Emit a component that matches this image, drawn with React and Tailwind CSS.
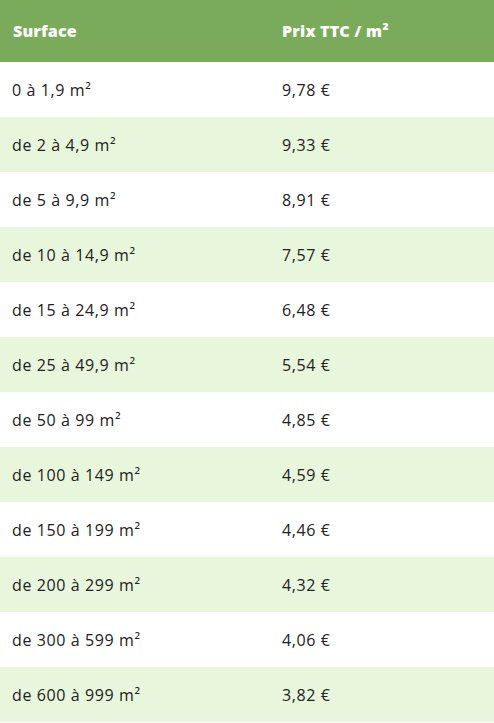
const rows = [
  ["0 à 1,9 m²", "9,78 €"],
  ["de 2 à 4,9 m²", "9,33 €"],
  ["de 5 à 9,9 m²", "8,91 €"],
  ["de 10 à 14,9 m²", "7,57 €"],
  ["de 15 à 24,9 m²", "6,48 €"],
  ["de 25 à 49,9 m²", "5,54 €"],
  ["de 50 à 99 m²", "4,85 €"],
  ["de 100 à 149 m²", "4,59 €"],
  ["de 150 à 199 m²", "4,46 €"],
  ["de 200 à 299 m²", "4,32 €"],
  ["de 300 à 599 m²", "4,06 €"],
  ["de 600 à 999 m²", "3,82 €"],
];

export default function App() {
  return (
    <div className="w-[494px] bg-white font-['Open_Sans',sans-serif] text-[16px] text-[#222222]">
      {/* Header */}
      <div className="grid grid-cols-[270px_1fr] h-[62px] items-center bg-[#79ab5a] text-white font-extrabold text-[16px] tracking-[0.2px]">
        <div className="px-[13px]">Surface</div>
        <div className="px-[12px]">Prix TTC / m²</div>
      </div>

      {rows.map(([surface, prix], i) => (
        <div
          key={surface}
          className={`grid grid-cols-[270px_1fr] h-[55px] items-center tracking-[0.6px] ${i % 2 === 1 ? "bg-[#e8f6dc]" : "bg-white"}`}
        >
          <div className="px-[12px]">{surface}</div>
          <div className="px-[12px]">{prix}</div>
        </div>
      ))}
    </div>
  );
}
